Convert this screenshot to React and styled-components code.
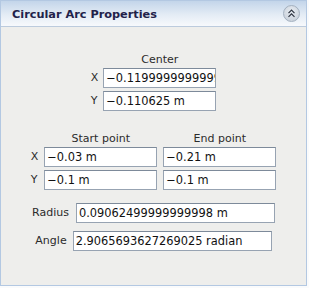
import styled, { createGlobalStyle } from 'styled-components';

const Global = createGlobalStyle`
  html, body {
    margin: 0;
    padding: 0;
    background: #fafbfc;
  }
  body {
    font-family: "DejaVu Sans", "Liberation Sans", sans-serif;
  }
`

const Panel = styled.section`
  width: 307px;
  height: 286px;
  box-sizing: border-box;
  border: 1px solid #b3c8e2;
  background: #eeeeec;
  display: flex;
  flex-direction: column;
`

const Header = styled.header`
  height: 25px;
  flex: none;
  display: flex;
  align-items: center;
  justify-content: space-between;
  padding: 0 6px 0 11px;
  background: linear-gradient(#c3d5ea, #e4ecf5 55%, #f7f9fc);
  border-bottom: 1px solid #bccbdd;
`

const Title = styled.h1`
  margin: 0;
  font-size: 11.3px;
  font-weight: bold;
  color: #22224a;
  padding-top: 1px;
`

const Collapse = styled.button`
  width: 17px;
  height: 17px;
  padding: 0;
  border-radius: 50%;
  border: 1px solid #a3b0bf;
  background: radial-gradient(circle at 50% 35%, #e6ebf1, #c4ccd6);
  display: flex;
  align-items: center;
  justify-content: center;
  svg {
    width: 9px;
    height: 9px;
  }
`

const Body = styled.div`
  display: flex;
  flex-direction: column;
  align-items: center;
  padding-top: 26px;
  font-size: 11px;
  color: #2b2b2b;
`

const Grid = styled.div`
  display: grid;
  grid-template-columns: auto repeat(${({ cols }) => cols}, 113px);
  column-gap: ${({ gap }) => gap}px;
  row-gap: 3px;
  align-items: center;
  margin-bottom: ${({ after }) => after}px;
`

const Heading = styled.div`
  text-align: center;
  height: 12px;
  line-height: 13px;
  grid-column: ${({ col }) => col};
  margin-top: ${({ top }) => top || 0}px;
`

const Label = styled.span`
  line-height: 20px;
`

const Field = styled.div`
  height: 20px;
  width: ${({ w }) => (w ? `${w}px` : 'auto')};
  box-sizing: border-box;
  background: #ffffff;
  border: 1px solid #97a3b2;
  border-top-color: #7d8a9a;
  padding-left: 2px;
  line-height: 18px;
  font-size: 11.4px;
  color: #111;
  white-space: nowrap;
  overflow: hidden;
`

const Row = styled.div`
  display: flex;
  align-items: center;
  gap: ${({ gap }) => gap}px;
  margin-bottom: 8px;
`

const Chevrons = () => (
  <svg viewBox="0 0 9 9" fill="none" stroke="#2e3440" strokeWidth="1.2">
    <path d="M1.5 4.2 L4.5 1.2 L7.5 4.2" />
    <path d="M1.5 7.8 L4.5 4.8 L7.5 7.8" />
  </svg>
)

export default function App() {
  return (
    <>
      <Global />
      <Panel>
        <Header>
          <Title>Circular Arc Properties</Title>
          <Collapse aria-label="Collapse"><Chevrons /></Collapse>
        </Header>
        <Body>
          <Grid cols={1} gap={5} after={21}>
            <Heading col={2}>Center</Heading>
            <Label>X</Label>
            <Field>−0.11999999999999998 m</Field>
            <Label>Y</Label>
            <Field>−0.110625 m</Field>
          </Grid>
          <Grid cols={2} gap={6} after={13}>
            <Heading col={2}>Start point</Heading>
            <Heading col={3}>End point</Heading>
            <Label>X</Label>
            <Field>−0.03 m</Field>
            <Field>−0.21 m</Field>
            <Label>Y</Label>
            <Field>−0.1 m</Field>
            <Field>−0.1 m</Field>
          </Grid>
          <Row gap={7}>
            <Label>Radius</Label>
            <Field w={199}>0.09062499999999998 m</Field>
          </Row>
          <Row gap={6}>
            <Label>Angle</Label>
            <Field w={199}>2.9065693627269025 radian</Field>
          </Row>
        </Body>
      </Panel>
    </>
  );
}
